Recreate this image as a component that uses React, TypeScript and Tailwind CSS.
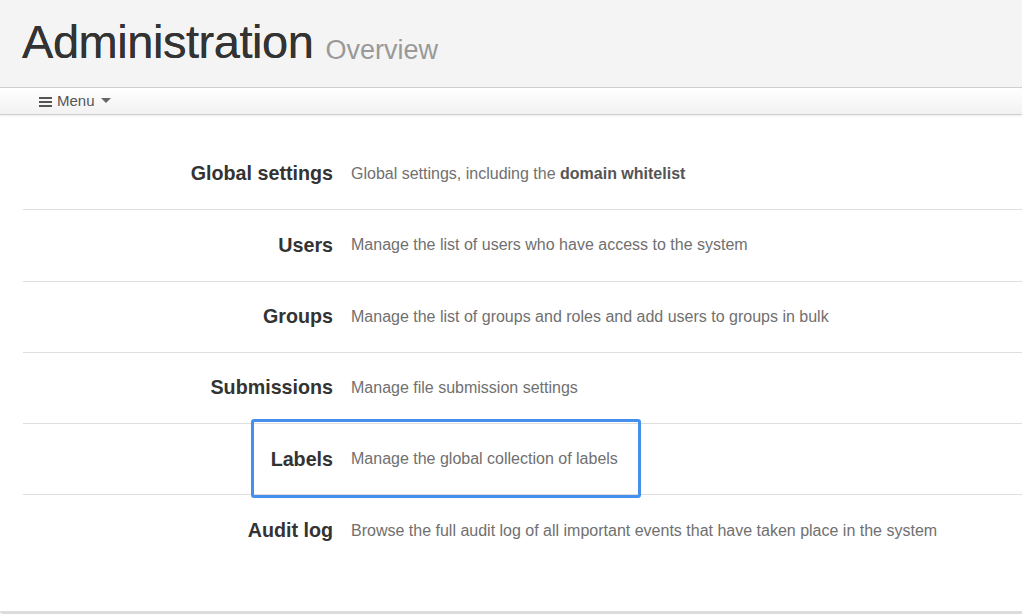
import { ReactNode } from "react";

type Item = { name: string; desc: ReactNode; highlight?: boolean };

const items: Item[] = [
  {
    name: "Global settings",
    desc: (
      <>
        Global settings, including the <b className="font-bold text-[#555]">domain whitelist</b>
      </>
    ),
  },
  { name: "Users", desc: "Manage the list of users who have access to the system" },
  { name: "Groups", desc: "Manage the list of groups and roles and add users to groups in bulk" },
  { name: "Submissions", desc: "Manage file submission settings" },
  { name: "Labels", desc: "Manage the global collection of labels", highlight: true },
  {
    name: "Audit log",
    desc: "Browse the full audit log of all important events that have taken place in the system",
  },
];

const App = () => {
  return (
    <div className="w-[1022px] h-[614px] bg-white flex flex-col overflow-hidden font-['Liberation_Sans',Arial,sans-serif]">
      <header className="h-[87px] bg-[#f4f4f4] flex items-end pl-[22px] pb-[22px]">
        <h1 className="text-[47px] leading-none text-[#333] tracking-[-0.45px] [text-shadow:0_0_0.6px_#333]">
          Administration
        </h1>
        <span className="text-[27px] leading-none text-[#999] ml-[12px] mb-[1px]">Overview</span>
      </header>

      <nav className="h-[28px] border-y border-[#cfcfcf] bg-gradient-to-b from-white to-[#f2f2f2] flex items-center pl-[39px] text-[15px] text-[#555] shadow-[0_1px_2px_rgba(0,0,0,0.08)]">
        <svg width="13" height="11" viewBox="0 0 13 11" className="mr-[5px]">
          <rect x="0" y="1" width="13" height="2" fill="#555" />
          <rect x="0" y="5" width="13" height="2" fill="#555" />
          <rect x="0" y="9" width="13" height="2" fill="#555" />
        </svg>
        <span>Menu</span>
        <svg width="10" height="6" viewBox="0 0 10 6" className="ml-[6px]">
          <path d="M0 0 L10 0 L5 5 Z" fill="#666" />
        </svg>
      </nav>

      <main className="flex-1 pt-[24px] pl-[23px]">
        {items.map((item, i) => (
          <div
            key={item.name}
            className={`relative h-[71.3px] flex items-center ${
              i < items.length - 1 ? "border-b border-[#dedede]" : ""
            }`}
          >
            <div className="w-[310px] text-right text-[19.7px] font-bold text-[#333]">{item.name}</div>
            <div className="ml-[18px] text-[16px] text-[#707070]">{item.desc}</div>
            {item.highlight && (
              <div className="absolute left-[228px] top-[-5px] w-[390px] h-[79px] border-[3px] border-[#4590ee] rounded-[3px]" />
            )}
          </div>
        ))}
      </main>

      <div className="h-[3px] bg-[#dcdcdc] rounded-bl-[6px]" />
    </div>
  );
};

export default App;
